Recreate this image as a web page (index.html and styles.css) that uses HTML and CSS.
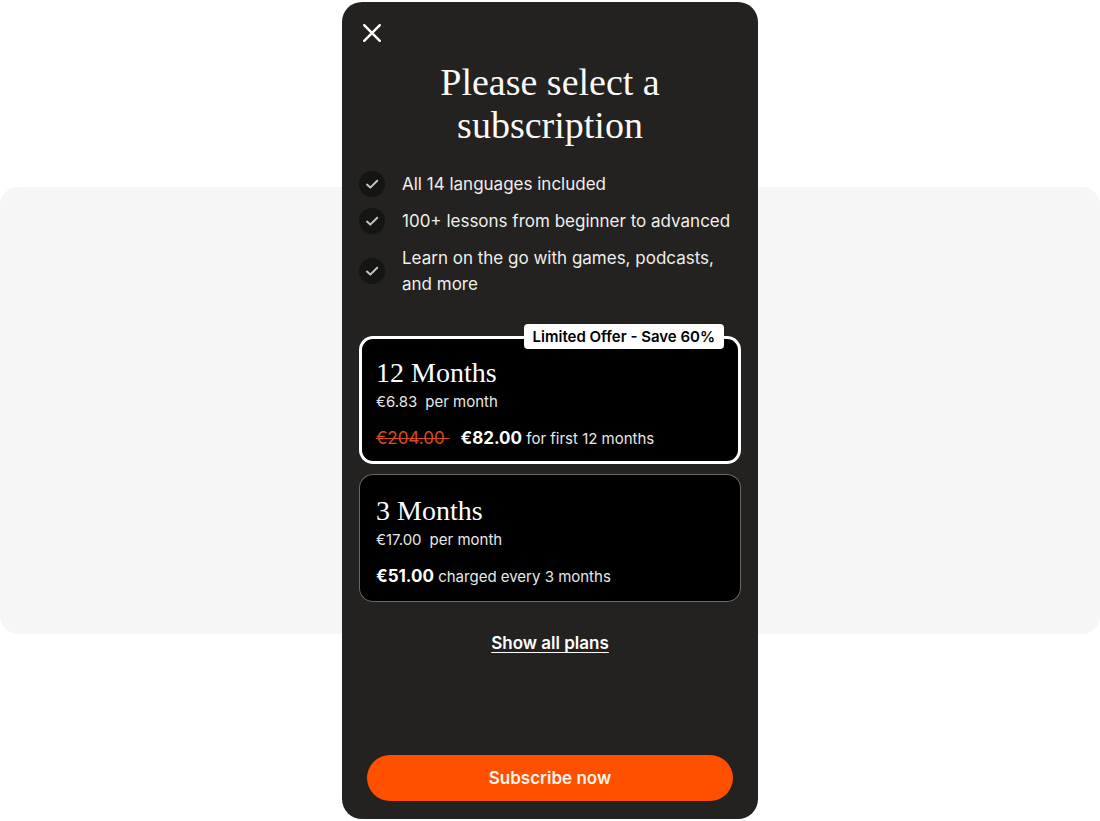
FILE: index.html
```html
<!DOCTYPE html>
<html lang="en">
<head>
<meta charset="utf-8">
<meta name="viewport" content="width=device-width, initial-scale=1">
<title>Please select a subscription</title>
<link rel="stylesheet" href="styles.css">
</head>
<body>
<main class="stage">
  <form class="panel">
    <button class="close" type="button" aria-label="Close">
      <svg width="20" height="20" viewBox="0 0 20 20"><path d="M2.2 2.2 17.8 17.8M17.8 2.2 2.2 17.8"/></svg>
    </button>
    <h1 class="title">Please select a subscription</h1>
    <ul class="features">
      <li class="feature">
        <svg class="tick" viewBox="0 0 26 26"><circle cx="13" cy="13" r="13"/><path d="M8 13.6 11.3 16.6 18.2 9.8"/></svg>
        <span>All 14 languages included</span>
      </li>
      <li class="feature">
        <svg class="tick" viewBox="0 0 26 26"><circle cx="13" cy="13" r="13"/><path d="M8 13.6 11.3 16.6 18.2 9.8"/></svg>
        <span>100+ lessons from beginner to advanced</span>
      </li>
      <li class="feature">
        <svg class="tick" viewBox="0 0 26 26"><circle cx="13" cy="13" r="13"/><path d="M8 13.6 11.3 16.6 18.2 9.8"/></svg>
        <span>Learn on the go with games, podcasts, and more</span>
      </li>
    </ul>
    <div class="plans">
      <label class="plan">
        <input class="plan-input" type="radio" name="plan" value="12" checked>
        <span class="badge">Limited Offer - Save 60%</span>
        <span class="plan-name">12 Months</span>
        <span class="rate"><span>€6.83</span><span>per month</span></span>
        <span class="total"><s class="old">€204.00&nbsp;</s><span><b class="price">€82.00</b> for first 12 months</span></span>
      </label>
      <label class="plan">
        <input class="plan-input" type="radio" name="plan" value="3">
        <span class="plan-name">3 Months</span>
        <span class="rate"><span>€17.00</span><span>per month</span></span>
        <span class="total"><span><b class="price">€51.00</b> charged every 3 months</span></span>
      </label>
    </div>
    <a class="all-plans" href="#plans">Show all plans</a>
    <button class="subscribe" type="submit">Subscribe now</button>
  </form>
</main>
</body>
</html>
```
FILE: styles.css
```css
* { box-sizing: border-box; }

body {
  margin: 0;
  background: #fff;
  font-family: Inter, "Liberation Sans", sans-serif;
}

.stage {
  display: grid;
  align-items: center;
  justify-items: center;
  min-height: 100vh;
  padding: 2px 0;
}

.stage::before {
  content: "";
  grid-area: 1 / 1;
  width: 100%;
  height: 447px;
  border-radius: 18px;
  background: #f6f6f6;
}

.panel {
  grid-area: 1 / 1;
  align-self: stretch;
  display: flex;
  flex-direction: column;
  width: 100%;
  max-width: 416px;
  padding: 21px 17px 18px;
  border-radius: 20px;
  background: #232220;
  color: #fbfaf8;
  z-index: 1;
}

.close {
  align-self: flex-start;
  display: flex;
  margin-left: 3px;
  padding: 0;
  border: 0;
  background: none;
}

.close path {
  fill: none;
  stroke: #fff;
  stroke-width: 2.4;
  stroke-linecap: round;
}

.title {
  max-width: 260px;
  margin: 18px auto 24px;
  font: 400 38px/43px "Liberation Serif", serif;
  text-align: center;
}

.features {
  display: flex;
  flex-direction: column;
  gap: 11px;
  margin: 0 0 39px;
  padding: 0;
  list-style: none;
  font-size: 17px;
  line-height: 26px;
  color: #efeeec;
}

.feature {
  display: flex;
  align-items: center;
  gap: 17px;
}

.tick {
  flex: none;
  width: 26px;
  height: 26px;
}

.tick circle { fill: #151514; }

.tick path {
  fill: none;
  stroke: #c4c3c1;
  stroke-width: 2;
  stroke-linecap: round;
  stroke-linejoin: round;
}

.plans {
  display: flex;
  flex-direction: column;
  gap: 10px;
}

.plan {
  position: relative;
  display: flex;
  flex-direction: column;
  padding: 19px 17px 14px;
  border-radius: 14px;
  background: #000;
  box-shadow: inset 0 0 0 1px #6a6967;
  font-size: 15px;
  line-height: 22px;
  color: #e8e7e5;
}

.plan:has(.plan-input:checked) { box-shadow: inset 0 0 0 3px #fff; }

.plan-input {
  position: absolute;
  opacity: 0;
  margin: 0;
}

.badge {
  position: absolute;
  top: -12px;
  right: 17px;
  padding: 0 9px;
  border-radius: 4px;
  background: #fff;
  color: #000;
  font-size: 15px;
  font-weight: 600;
  line-height: 25px;
}

.plan-name {
  font: 400 28px/36px "Liberation Serif", serif;
  color: #fff;
}

.rate {
  display: flex;
  gap: 8px;
}

.total {
  display: flex;
  gap: 11px;
  margin-top: 14px;
}

.old {
  font-size: 17px;
  color: #d94a1c;
}

.price {
  font-size: 17px;
  font-weight: 700;
  color: #fff;
}

.all-plans {
  align-self: center;
  margin: 29px 0;
  color: #fff;
  font-size: 17px;
  font-weight: 600;
  line-height: 24px;
  text-underline-offset: 3px;
}

.subscribe {
  margin: auto 8px 0;
  padding: 0;
  border: 0;
  border-radius: 23px;
  background: #ff5000;
  color: #fff5e9;
  font: 600 17px/46px Inter, "Liberation Sans", sans-serif;
}
```
